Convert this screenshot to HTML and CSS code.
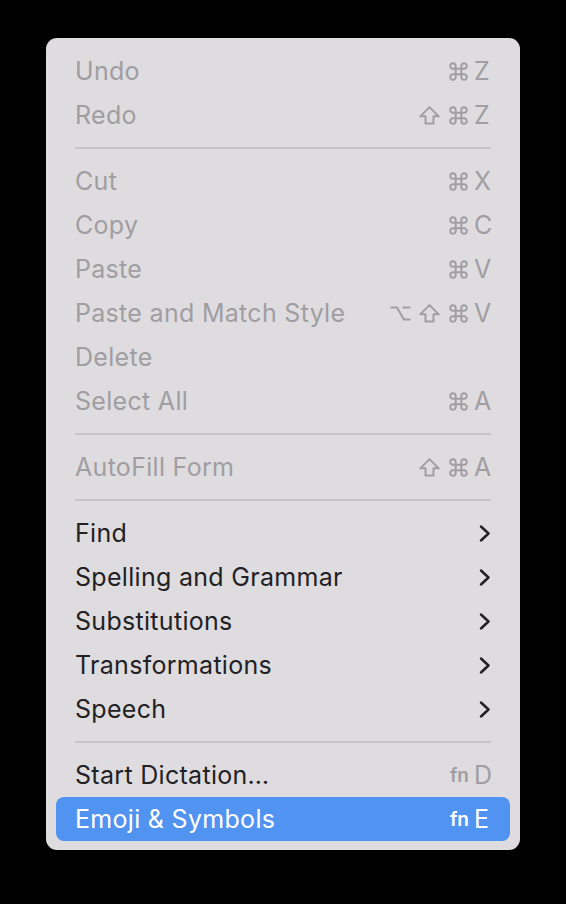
FILE: index.html
```html
<!DOCTYPE html>
<html>
<head>
<meta charset="utf-8">
<link rel="stylesheet" href="styles.css">
</head>
<body>
<svg width="0" height="0" class="defs">
  <defs>
    <path id="cmd" d="M7.3 7.3 V4.8 A2.6 2.6 0 1 0 4.8 7.3 H15.2 A2.6 2.6 0 1 0 12.7 4.8 V15.2 A2.6 2.6 0 1 0 15.2 12.7 H4.8 A2.6 2.6 0 1 0 7.3 15.2 Z"/>
    <path id="shift" d="M10 2 L18.8 10.8 H13.8 V17.6 H6.2 V10.8 H1.2 Z"/>
    <path id="opt" d="M0.5 4.2 H6.8 L13.2 15.8 H19.5 M12 4.2 H19.5"/>
  </defs>
</svg>
<div class="menu">
  <div class="item disabled"><span class="label">Undo</span><span class="sc"><svg class="m" viewBox="0 0 20 20"><use href="#cmd"/></svg><span class="key">Z</span></span></div>
  <div class="item disabled"><span class="label">Redo</span><span class="sc"><svg class="m" viewBox="0 0 20 20"><use href="#shift"/></svg><svg class="m" viewBox="0 0 20 20"><use href="#cmd"/></svg><span class="key">Z</span></span></div>
  <div class="sep"></div>
  <div class="item disabled"><span class="label">Cut</span><span class="sc"><svg class="m" viewBox="0 0 20 20"><use href="#cmd"/></svg><span class="key">X</span></span></div>
  <div class="item disabled"><span class="label">Copy</span><span class="sc"><svg class="m" viewBox="0 0 20 20"><use href="#cmd"/></svg><span class="key">C</span></span></div>
  <div class="item disabled"><span class="label">Paste</span><span class="sc"><svg class="m" viewBox="0 0 20 20"><use href="#cmd"/></svg><span class="key">V</span></span></div>
  <div class="item disabled"><span class="label">Paste and Match Style</span><span class="sc"><svg class="m" viewBox="0 0 20 20"><use href="#opt"/></svg><svg class="m" viewBox="0 0 20 20"><use href="#shift"/></svg><svg class="m" viewBox="0 0 20 20"><use href="#cmd"/></svg><span class="key">V</span></span></div>
  <div class="item disabled"><span class="label">Delete</span></div>
  <div class="item disabled"><span class="label">Select All</span><span class="sc"><svg class="m" viewBox="0 0 20 20"><use href="#cmd"/></svg><span class="key">A</span></span></div>
  <div class="sep"></div>
  <div class="item disabled"><span class="label">AutoFill Form</span><span class="sc"><svg class="m" viewBox="0 0 20 20"><use href="#shift"/></svg><svg class="m" viewBox="0 0 20 20"><use href="#cmd"/></svg><span class="key">A</span></span></div>
  <div class="sep"></div>
  <div class="item"><span class="label">Find</span><svg class="chev" viewBox="0 0 12 19"><path d="M2 2.5 L9.5 9.5 L2 16.5"/></svg></div>
  <div class="item"><span class="label">Spelling and Grammar</span><svg class="chev" viewBox="0 0 12 19"><path d="M2 2.5 L9.5 9.5 L2 16.5"/></svg></div>
  <div class="item"><span class="label">Substitutions</span><svg class="chev" viewBox="0 0 12 19"><path d="M2 2.5 L9.5 9.5 L2 16.5"/></svg></div>
  <div class="item"><span class="label">Transformations</span><svg class="chev" viewBox="0 0 12 19"><path d="M2 2.5 L9.5 9.5 L2 16.5"/></svg></div>
  <div class="item"><span class="label">Speech</span><svg class="chev" viewBox="0 0 12 19"><path d="M2 2.5 L9.5 9.5 L2 16.5"/></svg></div>
  <div class="sep"></div>
  <div class="item"><span class="label">Start Dictation…</span><span class="sc muted"><span class="fn">fn</span><span class="key">D</span></span></div>
  <div class="item active"><span class="label">Emoji &amp; Symbols</span><span class="sc"><span class="fn">fn</span><span class="key">E</span></span></div>
</div>
</body>
</html>
```

FILE: styles.css
```css
html, body {
  margin: 0;
  padding: 0;
  background: #000;
  width: 566px;
  height: 904px;
  overflow: hidden;
}
body {
  padding: 38px 0 0 46px;
  box-sizing: border-box;
  font-family: Inter, "Liberation Sans", sans-serif;
}
.defs {
  position: absolute;
  width: 0;
  height: 0;
}
.menu {
  width: 474px;
  height: 812px;
  box-sizing: border-box;
  background: #dedcdf;
  border-radius: 11px;
  padding: 11px 10px 9px 10px;
  display: flex;
  flex-direction: column;
}
.item {
  height: 44px;
  display: flex;
  align-items: center;
  padding: 0 19px 0 19px;
  border-radius: 8px;
  color: #222124;
  font-size: 25px;
  letter-spacing: 0.3px;
}
.item.disabled {
  color: #a09ea2;
}
.item.active {
  background: #5193f0;
  color: #fff;
}
.label {
  flex: 1;
}
.sep {
  height: 22px;
  display: flex;
  align-items: center;
  padding: 0 19px;
}
.sep::before {
  content: "";
  display: block;
  flex: 1;
  height: 2px;
  background: #c6c4c7;
}
.sc {
  display: flex;
  align-items: center;
  gap: 8px;
}
.muted {
  color: #a09ea2;
}
.m {
  width: 21px;
  height: 21px;
  fill: none;
  stroke: currentColor;
  stroke-width: 1.9;
  stroke-linejoin: round;
}
.key {
  width: 17px;
  margin-left: -3px;
  text-align: left;
  letter-spacing: 0;
}
.fn {
  font-size: 19px;
  font-weight: 600;
  letter-spacing: 0;
  padding-top: 1px;
}
.chev {
  width: 12px;
  height: 19px;
  fill: none;
  stroke: #222124;
  stroke-width: 2.5;
  stroke-linecap: round;
  stroke-linejoin: round;
}
```
